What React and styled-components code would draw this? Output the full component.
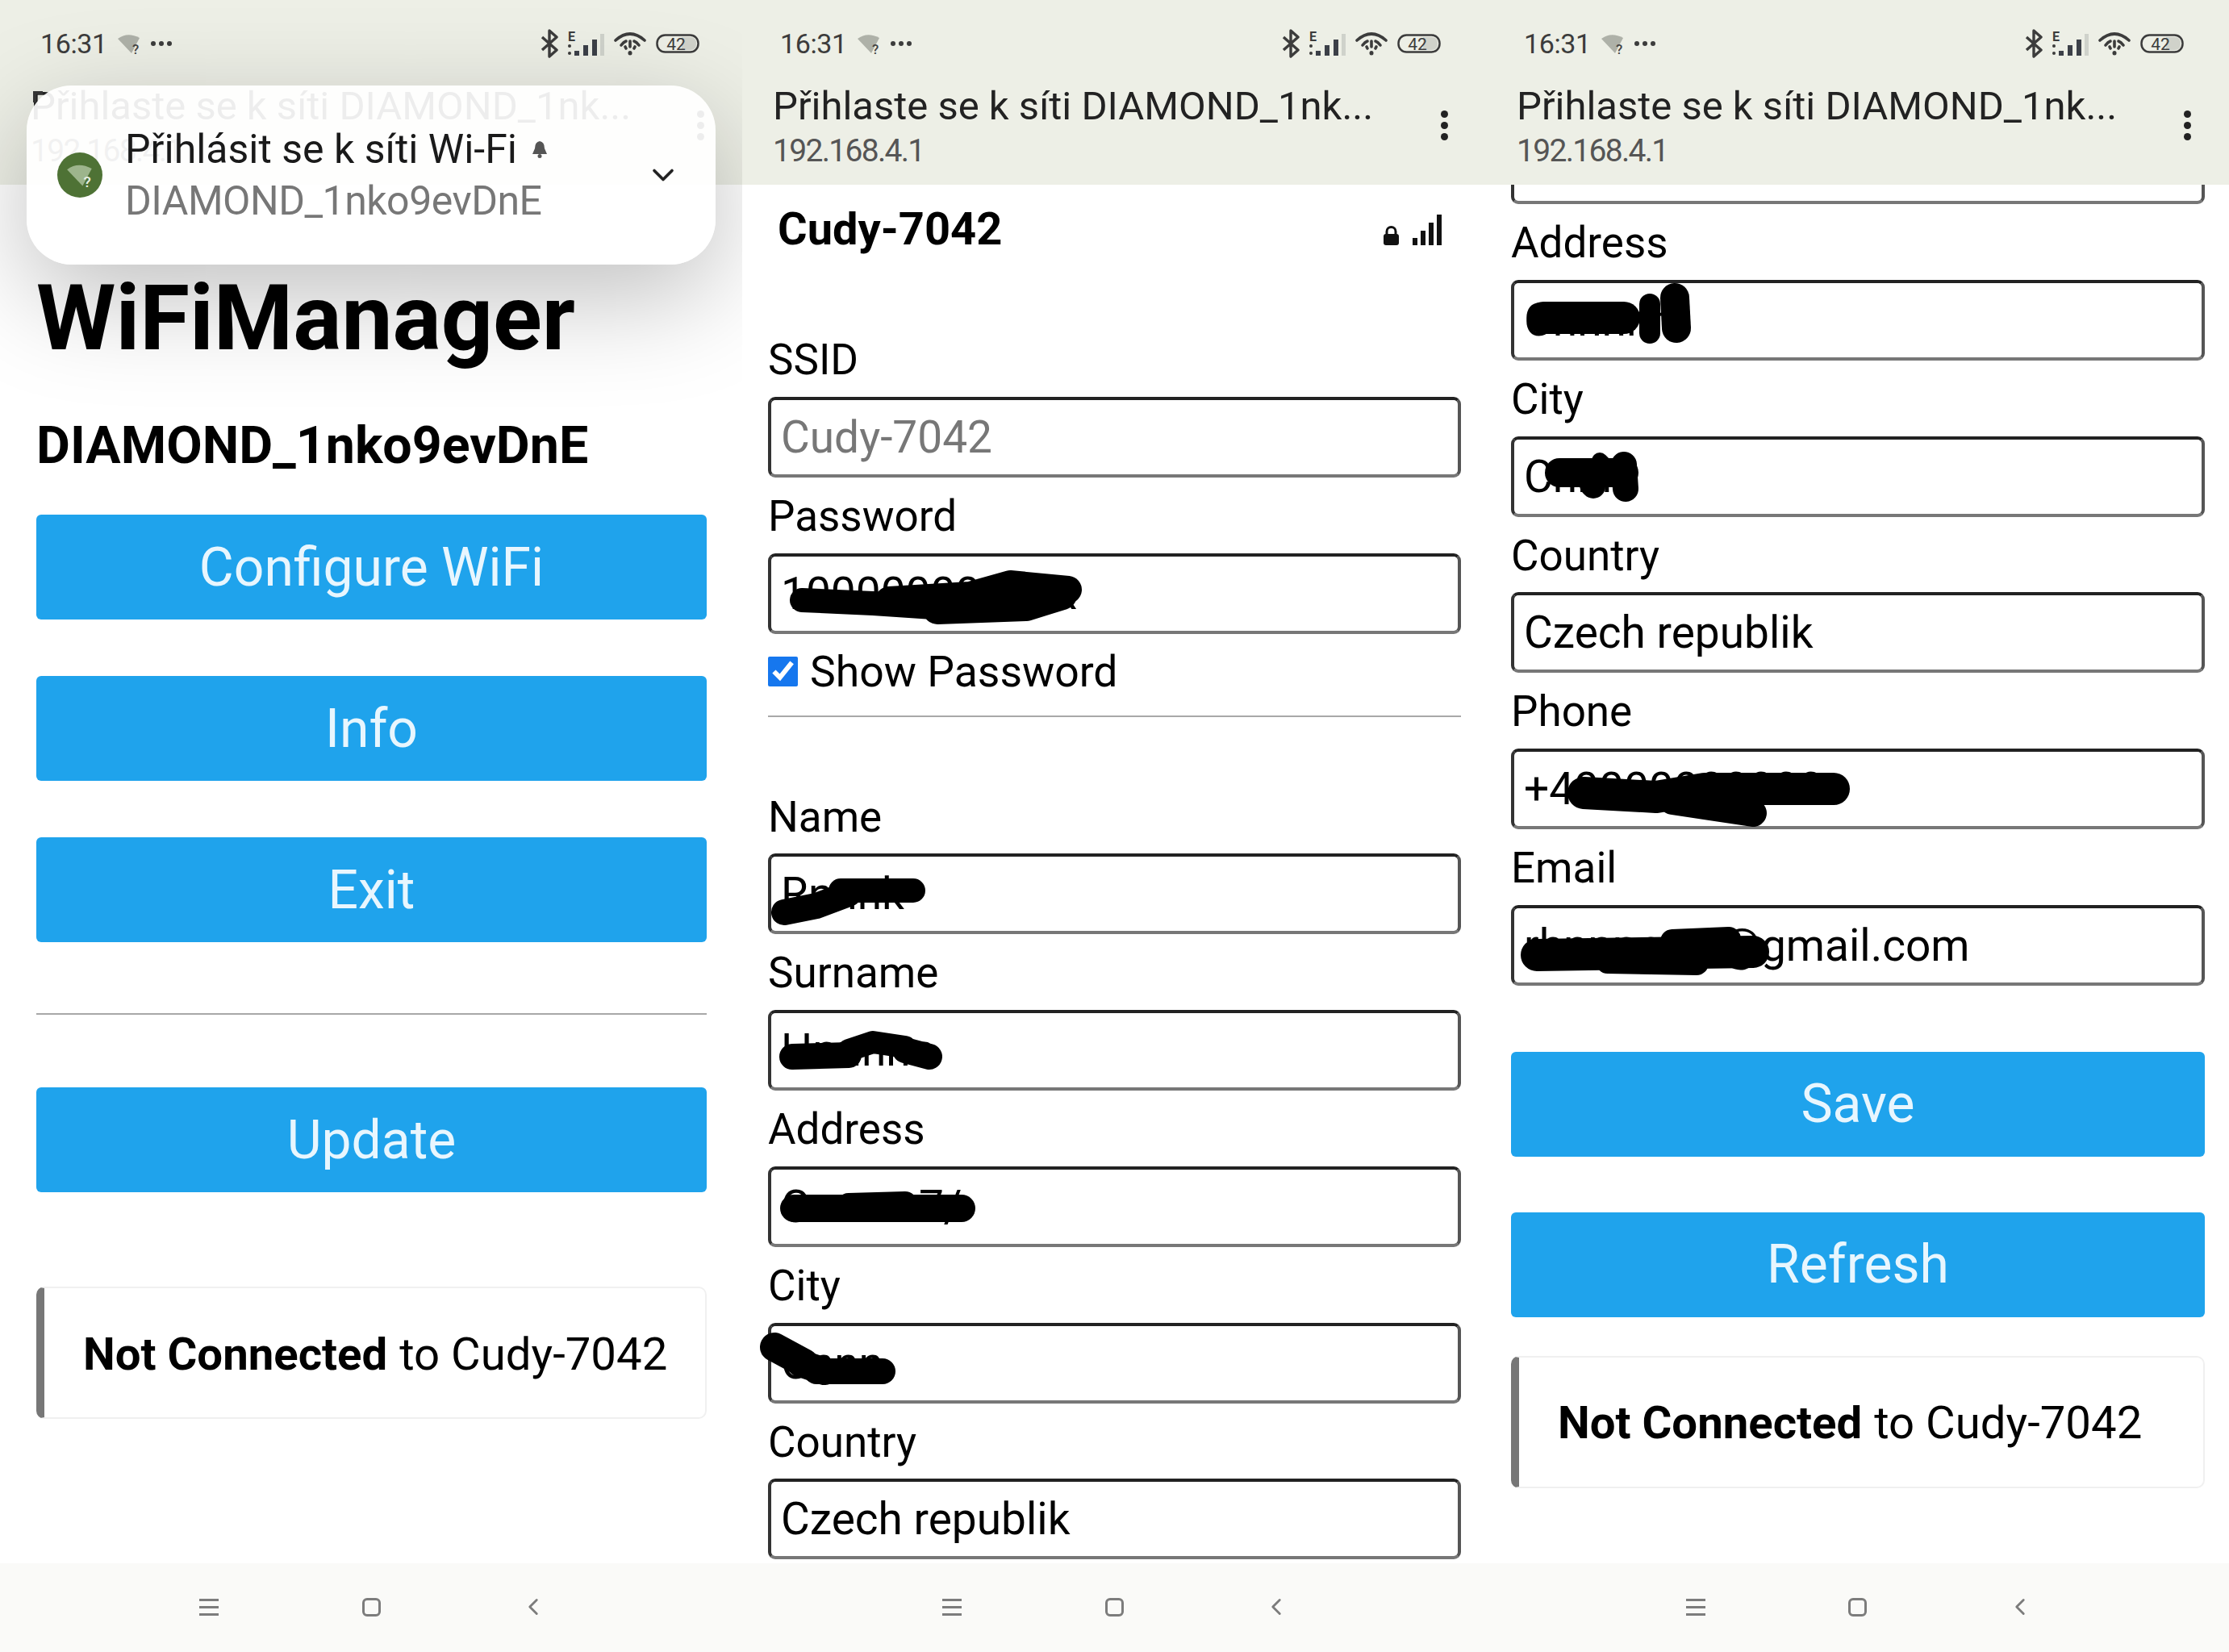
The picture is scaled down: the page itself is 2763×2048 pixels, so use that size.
import React from "react";
import styled, { createGlobalStyle } from "styled-components";
import { ChevronDown, ChevronLeft } from "lucide-react";

const GlobalStyle = createGlobalStyle`
  html, body {
    margin: 0;
    padding: 0;
    background: #fff;
  }
  * {
    box-sizing: border-box;
  }
  body {
    font-family: Roboto, "Noto Sans", sans-serif;
    color: #000;
  }
`;

const Screens = styled.div`
  display: grid;
  grid-template-columns: 920px 922px 921px;
  width: 2763px;
  height: 2048px;
  overflow: hidden;
`;

const Phone = styled.div`
  position: relative;
  display: flex;
  flex-direction: column;
  height: 2048px;
  background: #fff;
  overflow: hidden;
`;

const Header = styled.header`
  flex: 0 0 229px;
  background: #edefe6;
  position: relative;
  z-index: 1;
`;

const StatusRow = styled.div`
  display: flex;
  align-items: center;
  justify-content: space-between;
  height: 108px;
  padding: 0 ${(p) => 56 - p.$shift}px 0 ${(p) => 47 + p.$shift}px;
  color: #3c3c3c;
`;

const StatusGroup = styled.div`
  display: flex;
  align-items: center;
  gap: ${(p) => p.$gap}px;
`;

const Clock = styled.span`
  font-size: 34px;
  letter-spacing: -0.4px;
`;

const MoreDots = styled.div`
  display: flex;
  gap: 4px;
  span {
    width: 6px;
    height: 6px;
    border-radius: 50%;
    background: #3c3c3c;
  }
`;

const HeaderBody = styled.div`
  display: flex;
  align-items: center;
  justify-content: space-between;
  padding: 2px 47px 0 38px;
`;

const HeaderText = styled.div`
  display: flex;
  flex-direction: column;
  gap: 8px;
`;

const Title = styled.div`
  font-size: 49px;
  line-height: 44px;
  color: #222;
  white-space: nowrap;
`;

const Url = styled.div`
  font-size: 39px;
  line-height: 50px;
  letter-spacing: -1.7px;
  color: #555;
`;

const Kebab = styled.div`
  display: flex;
  flex-direction: column;
  gap: 5px;
  margin-bottom: 12px;
  span {
    width: 9px;
    height: 9px;
    border-radius: 50%;
    background: #222;
  }
`;

const Content = styled.main`
  flex: 1;
  min-height: 0;
  overflow: hidden;
  padding: ${(p) => p.$pad};
`;

const Scrolled = styled.div`
  margin-top: ${(p) => p.$offset}px;
`;

const NavBar = styled.nav`
  flex: 0 0 110px;
  display: grid;
  grid-template-columns: 201px 201px 201px;
  justify-content: center;
  justify-items: center;
  align-items: center;
  background: #fafaf8;
  color: #7c7c7c;
  padding-bottom: 2px;
`;

const MenuLines = styled.div`
  display: flex;
  flex-direction: column;
  gap: 6px;
  width: 24px;
  span {
    height: 3px;
    background: #7c7c7c;
  }
`;

const HomeSquare = styled.div`
  width: 23px;
  height: 23px;
  border: 3px solid #7c7c7c;
  border-radius: 6px;
`;

const MainTitle = styled.h1`
  margin: 106px 0 0;
  font-size: 112.5px;
  line-height: 120px;
  font-weight: 700;
  white-space: nowrap;
`;

const DeviceTitle = styled.h3`
  margin: 62px 0 0;
  font-size: 64.5px;
  line-height: 70px;
  font-weight: 700;
  white-space: nowrap;
`;

const ActionStack = styled.div`
  display: flex;
  flex-direction: column;
  gap: ${(p) => p.$gap || 70}px;
  margin-top: ${(p) => p.$top}px;
`;

const ActionButton = styled.button`
  display: block;
  width: 100%;
  height: 130px;
  border: none;
  border-radius: 6px;
  background: #1fa3ec;
  color: #e8f6fe;
  font-family: inherit;
  font-size: 66px;
`;

const Rule = styled.hr`
  margin: ${(p) => p.$top}px 0 ${(p) => p.$bottom}px;
  border: none;
  height: 2px;
  background: #a8a8a8;
`;

const StatusMsg = styled.div`
  display: flex;
  align-items: center;
  height: 164px;
  margin-top: ${(p) => p.$top}px;
  padding: 3px 0 0 48px;
  border: 2px solid #f0f0f0;
  border-left: 10px solid #777;
  border-radius: 10px;
  font-size: 56.3px;
  white-space: nowrap;
  b {
    font-weight: 700;
    margin-right: 15px;
  }
`;

const NetworkRow = styled.div`
  display: flex;
  align-items: center;
  justify-content: space-between;
  height: 70px;
  margin-top: 20px;
  padding: 0 24px 0 12px;
`;

const NetworkName = styled.span`
  font-size: 56px;
  font-weight: 700;
`;

const NetworkIcons = styled.div`
  display: flex;
  align-items: flex-end;
  gap: 16px;
  margin-top: 2px;
`;

const FormSection = styled.section`
  margin-top: ${(p) => p.$top || 0}px;
`;

const FieldLabel = styled.label`
  display: block;
  height: 93.75px;
  font-size: 53px;
  line-height: 96px;
`;

const InputWrap = styled.div`
  position: relative;
  height: 100px;
`;

const TextInput = styled.input`
  display: block;
  width: 100%;
  height: 100%;
  padding: 0 12px;
  border: 4px solid;
  border-color: #222 #555 #777 #333;
  border-radius: 9px;
  background: #fff;
  color: #000;
  font-family: inherit;
  font-size: 55px;
  outline: none;
  &::placeholder {
    color: #777;
  }
`;

const Scribble = styled.svg`
  position: absolute;
  left: 0;
  top: 0;
  width: 100%;
  height: 100%;
  overflow: visible;
  pointer-events: none;
  path {
    fill: none;
    stroke: #000;
    stroke-linecap: round;
    stroke-linejoin: round;
  }
`;

const CheckRow = styled.div`
  display: flex;
  align-items: center;
  gap: 15px;
  height: 94px;
  font-size: 53.5px;
`;

const CheckBox = styled.input`
  width: 37px;
  height: 37px;
  margin: 0;
  accent-color: #1677ee;
`;

const Notification = styled.div`
  position: absolute;
  left: 33px;
  top: 106px;
  z-index: 3;
  display: flex;
  align-items: center;
  width: 854px;
  height: 222px;
  padding: 0 43px 0 38px;
  border-radius: 56px;
  background: rgba(255, 255, 255, 0.92);
  box-shadow: 0 40px 130px rgba(0, 0, 0, 0.25);
`;

const TitleRemnant = styled.span`
  position: absolute;
  left: 8px;
  top: 7px;
  width: 12px;
  height: 14px;
  border-top: 4px solid #333;
  border-left: 4px solid #333;
`;

const NotifyBadge = styled.div`
  flex: 0 0 56px;
  height: 56px;
  display: flex;
  align-items: center;
  justify-content: center;
  border-radius: 50%;
  background: #4e7235;
`;

const NotifyText = styled.div`
  flex: 1;
  display: flex;
  flex-direction: column;
  gap: 12px;
  margin: 0 0 0 28px;
`;

const NotifyTitle = styled.div`
  display: flex;
  align-items: center;
  gap: 16px;
  font-size: 50px;
  line-height: 52px;
  color: #1a1a1a;
`;

const NotifySub = styled.div`
  font-size: 50px;
  line-height: 52px;
  letter-spacing: -0.5px;
  color: #777;
`;

const WifiQuestion = ({ size = 30, fan = "#aeb1a8", mark = "#444" }) => (
  <svg width={size} height={size} viewBox="0 0 30 30">
    <path d="M1 9 Q13 0 28 8 L18 27 Z" fill={fan} />
    <text x="19" y="28" fontSize="17" fontWeight="500" fontFamily="Roboto" fill={mark}>?</text>
  </svg>
);

const BluetoothMark = () => (
  <svg width="22" height="36" viewBox="0 0 22 36" fill="none" stroke="#3c3c3c" strokeWidth="3.4" strokeLinejoin="round">
    <path d="M2 10 L20 26 L11 34 V2 L20 10 L2 26" />
  </svg>
);

const SignalE = () => (
  <svg width="45" height="32" viewBox="0 0 45 32">
    <text x="0" y="13" fontSize="16" fontWeight="700" fontFamily="Roboto" fill="#3c3c3c">E</text>
    <circle cx="2" cy="19" r="2" fill="#3c3c3c" />
    <circle cx="2" cy="28" r="2" fill="#3c3c3c" />
    <rect x="8" y="25" width="6" height="6" fill="#3c4048" />
    <rect x="19" y="18" width="6" height="13" fill="#3c4048" />
    <rect x="30" y="11" width="6" height="20" fill="#3c4048" />
    <rect x="40" y="4" width="5" height="27" fill="#cfd2cb" />
  </svg>
);

const WifiStatus = () => (
  <svg width="40" height="30" viewBox="0 0 40 30" fill="none" stroke="#3c3c3c" strokeWidth="3.6" strokeLinecap="round">
    <path d="M2 11 Q20 -5 38 11" />
    <path d="M9 17 Q12 13 15 12" />
    <path d="M31 17 Q28 13 25 12" />
    <path d="M20 12 V19" />
    <path d="M14 19 L15 21" />
    <path d="M26 19 L25 21" />
    <path d="M20 26.5 V27" strokeWidth="5" />
  </svg>
);

const Battery = () => (
  <svg width="54" height="24" viewBox="0 0 54 24">
    <rect x="1.5" y="1.5" width="51" height="21" rx="10" fill="none" stroke="#3c3c3c" strokeWidth="2.5" />
    <path d="M32 4 H43 Q50 4 50 12 Q50 20 43 20 H32 Z" fill="#d0d2ca" />
    <text x="25" y="19.5" textAnchor="middle" fontSize="21" fontFamily="Roboto" fill="#3c3c3c">42</text>
  </svg>
);

const Lock = () => (
  <svg width="21" height="24" viewBox="0 0 21 24">
    <path d="M5 11 V7 a5.5 5.5 0 0 1 11 0 V11" fill="none" stroke="#111" strokeWidth="3" />
    <rect x="1" y="10" width="19" height="14" rx="3" fill="#111" />
  </svg>
);

const WifiBars = () => (
  <svg width="36" height="38" viewBox="0 0 36 38" fill="#111">
    <rect x="0" y="29" width="6" height="9" />
    <rect x="10" y="20" width="6" height="18" />
    <rect x="20" y="10" width="6" height="28" />
    <rect x="30" y="0" width="6" height="38" />
  </svg>
);

const Bell = () => (
  <svg width="24" height="22" viewBox="0 0 24 22">
    <path d="M12 1 Q18 2 18 10 L21 17 H3 L6 10 Q6 2 12 1 Z" fill="#555" />
    <circle cx="12" cy="19.5" r="2.5" fill="#555" />
  </svg>
);

const PhoneHeader = ({ shift = 0 }) => (
  <Header>
    <StatusRow $shift={shift}>
      <StatusGroup $gap={12}>
        <Clock>16:31</Clock>
        <WifiQuestion />
        <MoreDots><span /><span /><span /></MoreDots>
      </StatusGroup>
      <StatusGroup $gap={12}>
        <BluetoothMark />
        <SignalE />
        <WifiStatus />
        <Battery />
      </StatusGroup>
    </StatusRow>
    <HeaderBody>
      <HeaderText>
        <Title>Přihlaste se k síti DIAMOND_1nk...</Title>
        <Url>192.168.4.1</Url>
      </HeaderText>
      <Kebab><span /><span /><span /></Kebab>
    </HeaderBody>
  </Header>
);

const PhoneNav = () => (
  <NavBar>
    <MenuLines><span /><span /><span /></MenuLines>
    <HomeSquare />
    <ChevronLeft size={34} strokeWidth={2} />
  </NavBar>
);

const Field = ({ label, value, placeholder, strokes = [] }) => (
  <div>
    {label && <FieldLabel>{label}</FieldLabel>}
    <InputWrap>
      <TextInput readOnly value={value} placeholder={placeholder} />
      {strokes.length > 0 && (
        <Scribble viewBox="0 0 858 100" preserveAspectRatio="xMinYMin">
          {strokes.map(([d, w]) => (
            <path key={d} d={d} strokeWidth={w} />
          ))}
        </Scribble>
      )}
    </InputWrap>
  </div>
);

// the values are blacked out in the picture, so only filler sits under the scribbles
const passwordStrokes = [
  ["M42 58 L130 62 L220 68", 30],
  ["M150 58 L250 52 L300 38 L372 45", 34],
  ["M210 70 L320 66 L365 52", 36],
];

const formFirst = [
  { label: "Name", value: "Rnnnk", strokes: [["M20 73 L60 65 L100 50", 32], ["M90 46 L180 46", 30]] },
  { label: "Surname", value: "Hnnnnn", strokes: [["M30 58 L100 56", 32], ["M100 50 L130 40 L170 46", 28], ["M170 50 L200 58", 32]] },
  { label: "Address", value: "Cnnnn 7/", strokes: [["M32 52 L240 52", 34], ["M100 48 L170 46", 30]] },
  { label: "City", value: "Cnnn", strokes: [["M8 30 L45 50", 36], ["M40 50 L70 60", 34], ["M60 60 L142 60", 32]] },
  { label: "Country", value: "Czech republik" },
];

const formSecond = [
  { value: "" },
  { label: "Address", value: "Cnnnnn", strokes: [["M40 47 L140 47", 40], ["M172 30 L172 66", 26], ["M203 22 L205 60", 36]] },
  { label: "City", value: "Cnnn", strokes: [["M60 45 L140 45", 36], ["M100 60 L102 62", 30], ["M140 35 L142 65", 32], ["M110 30 L115 35", 20]] },
  { label: "Country", value: "Czech republik" },
  { label: "Phone", value: "+40000000000", strokes: [["M90 55 L180 60 L240 50 L400 50", 40], ["M200 65 L300 80", 34]] },
  { label: "Email", value: "rhnnnnnni@gmail.com", strokes: [["M32 62 L300 58", 40], ["M120 70 L230 72", 30], ["M200 45 L270 42", 30]] },
];

const App = () => (
  <>
    <GlobalStyle />
    <Screens>
      <Phone>
        <PhoneHeader shift={3} />
        <Notification>
          <TitleRemnant />
          <NotifyBadge><WifiQuestion size={34} fan="#9db58c" mark="#e8efe2" /></NotifyBadge>
          <NotifyText>
            <NotifyTitle>Přihlásit se k síti Wi-Fi <Bell /></NotifyTitle>
            <NotifySub>DIAMOND_1nko9evDnE</NotifySub>
          </NotifyText>
          <ChevronDown size={44} strokeWidth={2} color="#222" />
        </Notification>
        <Content $pad="0 44px 0 45px">
          <MainTitle>WiFiManager</MainTitle>
          <DeviceTitle>DIAMOND_1nko9evDnE</DeviceTitle>
          <ActionStack $top={51}>
            <ActionButton>Configure WiFi</ActionButton>
            <ActionButton>Info</ActionButton>
            <ActionButton>Exit</ActionButton>
          </ActionStack>
          <Rule $top={88} $bottom={90} />
          <ActionButton>Update</ActionButton>
          <StatusMsg $top={117}><b>Not Connected</b> to Cudy-7042</StatusMsg>
        </Content>
        <PhoneNav />
      </Phone>

      <Phone>
        <PhoneHeader />
        <Content $pad="0 31px 0 32px">
          <NetworkRow>
            <NetworkName>Cudy-7042</NetworkName>
            <NetworkIcons><Lock /><WifiBars /></NetworkIcons>
          </NetworkRow>
          <FormSection $top={79}>
            <Field label="SSID" value="" placeholder="Cudy-7042" />
            <Field label="Password" value="10000000000x" strokes={passwordStrokes} />
            <CheckRow>
              <CheckBox type="checkbox" defaultChecked />
              Show Password
            </CheckRow>
            <Rule $top={7} $bottom={0} />
          </FormSection>
          <FormSection $top={76}>
            {formFirst.map((f) => (
              <Field key={f.label} {...f} />
            ))}
          </FormSection>
        </Content>
        <PhoneNav />
      </Phone>

      <Phone>
        <PhoneHeader />
        <Content $pad="0 30px 0 31px">
          <Scrolled $offset={-76}>
            {formSecond.map((f, i) => (
              <Field key={i} {...f} />
            ))}
            <ActionStack $top={82} $gap={69}>
              <ActionButton>Save</ActionButton>
              <ActionButton>Refresh</ActionButton>
            </ActionStack>
            <StatusMsg $top={48}><b>Not Connected</b> to Cudy-7042</StatusMsg>
          </Scrolled>
        </Content>
        <PhoneNav />
      </Phone>
    </Screens>
  </>
);

export default App;
